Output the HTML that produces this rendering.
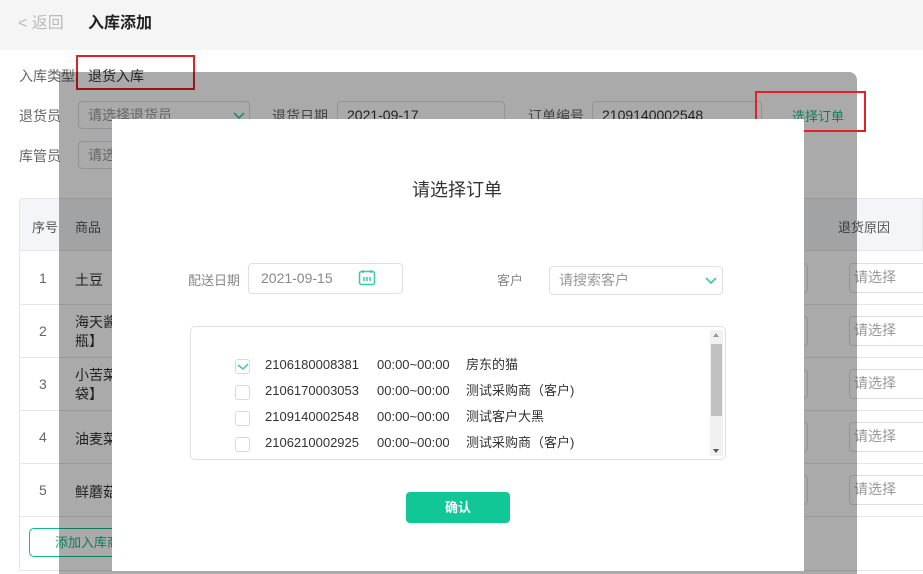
<!DOCTYPE html>
<html><head><meta charset="utf-8"><style>
*{box-sizing:border-box;margin:0;padding:0}
body{width:923px;height:574px;overflow:hidden;background:#fff;font-family:"Liberation Sans","Noto Sans CJK SC",sans-serif;font-size:14px;color:#333;position:relative}
.a{position:absolute;white-space:nowrap}
.inp{position:absolute;border:1px solid #dcdfe6;border-radius:4px;background:#fff;height:28px;line-height:26px;padding-left:9px;color:#999}
.red{position:absolute;border:2px solid #e0202a}
.lab{position:absolute;color:#666;font-size:14px}
.hl{position:absolute;left:19px;right:0;height:1px;background:#e6e6e6}
.cb{position:absolute;left:235px;width:15px;height:15px;border:1px solid #d8d8d8;border-radius:3px;background:#fff}
.row{position:absolute;font-size:13px;color:#333;line-height:16px;height:16px}
</style></head><body>
<div class="a" style="left:0;top:0;width:923px;height:50px;background:#f5f5f5"></div>
<div class="a" style="left:18px;top:13px;font-size:16px;color:#bbb;line-height:22px">&lt; 返回</div>
<div class="a" style="left:88px;top:13px;font-size:16px;font-weight:bold;color:#222;line-height:22px">入库添加</div>

<div class="lab" style="left:19px;top:66px">入库类型</div>
<div class="a" style="left:88px;top:66px;color:#333">退货入库</div>

<div class="lab" style="left:19px;top:106px">退货员</div>
<div class="inp" style="left:78px;top:101px;width:172px">请选择退货员</div>
<svg class="a" style="left:233px;top:111px" width="12" height="10"><path d="M1 2l5 5 5-5" fill="none" stroke="#3cc9a5" stroke-width="1.6"/></svg>
<div class="lab" style="left:272px;top:106px">退货日期</div>
<div class="inp" style="left:337px;top:101px;width:168px;color:#333">2021-09-17</div>
<div class="lab" style="left:528px;top:106px">订单编号</div>
<div class="inp" style="left:592px;top:101px;width:170px;color:#333">2109140002548</div>
<div class="a" style="left:792px;top:106px;color:#16b889;font-size:13px">选择订单</div>

<div class="lab" style="left:19px;top:146px">库管员</div>
<div class="inp" style="left:78px;top:141px;width:172px">请选择</div>

<div class="a" style="left:19px;top:198px;width:904px;height:53px;background:#f3f5f8;border:1px solid #e6e6e6;border-radius:4px 0 0 0"></div>
<div class="a" style="left:32px;top:217px;font-size:13px;color:#555">序号</div>
<div class="a" style="left:75px;top:217px;font-size:13px;color:#555">商品</div>
<div class="a" style="left:838px;top:217px;font-size:13px;color:#555">退货原因</div>
<div class="a" style="left:19px;top:251px;width:1px;height:320px;background:#e6e6e6"></div>
<div class="hl" style="top:304px"></div><div class="hl" style="top:357px"></div><div class="hl" style="top:410px"></div><div class="hl" style="top:463px"></div><div class="hl" style="top:516px"></div><div class="hl" style="top:570px"></div>
<div class="a" style="left:39px;top:270px;color:#666">1</div><div class="a" style="left:75px;top:270px">土豆</div>
<div class="a" style="left:39px;top:323px;color:#666">2</div><div class="a" style="left:75px;top:313px;line-height:19px">海天酱<br>瓶】</div>
<div class="a" style="left:39px;top:376px;color:#666">3</div><div class="a" style="left:75px;top:366px;line-height:19px">小苦菜<br>袋】</div>
<div class="a" style="left:39px;top:429px;color:#666">4</div><div class="a" style="left:75px;top:429px">油麦菜</div>
<div class="a" style="left:39px;top:482px;color:#666">5</div><div class="a" style="left:75px;top:482px">鲜蘑菇</div>
<div class="inp" style="left:849px;top:263px;width:90px;height:30px;padding-left:4px">请选择</div>
<div class="inp" style="left:849px;top:316px;width:90px;height:30px;padding-left:4px">请选择</div>
<div class="inp" style="left:849px;top:369px;width:90px;height:30px;padding-left:4px">请选择</div>
<div class="inp" style="left:849px;top:422px;width:90px;height:30px;padding-left:4px">请选择</div>
<div class="inp" style="left:849px;top:475px;width:90px;height:30px;padding-left:4px">请选择</div>
<div class="inp" style="left:760px;top:263px;width:48px;height:30px"></div>
<div class="inp" style="left:760px;top:316px;width:48px;height:30px"></div>
<div class="inp" style="left:760px;top:369px;width:48px;height:30px"></div>
<div class="inp" style="left:760px;top:422px;width:48px;height:30px"></div>
<div class="inp" style="left:760px;top:475px;width:48px;height:30px"></div>
<div class="a" style="left:29px;top:528px;width:130px;height:29px;border:1px solid #16b889;border-radius:5px;color:#16b889;font-size:13px;line-height:27px;padding-left:25px">添加入库商品</div>

<div class="red" style="left:76px;top:55px;width:119px;height:35px"></div>

<div class="a" style="left:59px;top:72px;width:798px;height:502px;background:rgba(0,0,0,0.335);border-radius:0 8px 0 0"></div>

<div class="red" style="left:755px;top:91px;width:111px;height:41px"></div>

<div class="a" style="left:112px;top:119px;width:692px;height:452px;background:#fff"></div>
<div class="a" style="left:412px;top:176px;font-size:18px;color:#333">请选择订单</div>
<div class="a" style="left:188px;top:270px;font-size:13px;color:#888">配送日期</div>
<div class="inp" style="left:248px;top:263px;width:155px;height:31px;line-height:29px;font-size:14px;color:#888;padding-left:12px">2021-09-15</div>
<svg class="a" style="left:358px;top:269px" width="18" height="17" viewBox="0 0 18 17"><rect x="1.5" y="2.5" width="15" height="13" rx="2" fill="none" stroke="#3cc9a5" stroke-width="1.5"/><path d="M5 1v3M13 1v3M6 8v4M9 8v4M12 8v4" stroke="#3cc9a5" stroke-width="1.5"/></svg>
<div class="a" style="left:497px;top:270px;font-size:13px;color:#888">客户</div>
<div class="inp" style="left:549px;top:266px;width:174px;height:29px;font-size:14px;color:#999">请搜索客户</div>
<svg class="a" style="left:705px;top:276px" width="12" height="10"><path d="M1 2l5 5 5-5" fill="none" stroke="#3cc9a5" stroke-width="1.6"/></svg>

<div class="a" style="left:190px;top:326px;width:536px;height:134px;border:1px solid #e0e0e0;border-radius:5px"></div>
<div class="a" style="left:710px;top:330px;width:13px;height:126px;background:#f1f1f1"></div>
<div class="a" style="left:711px;top:344px;width:11px;height:72px;background:#c1c1c1"></div>
<div class="a" style="left:713px;top:333px;width:0;height:0;border:3px solid transparent;border-bottom:4px solid #999;border-top:0"></div>
<div class="a" style="left:713px;top:449px;width:0;height:0;border:3px solid transparent;border-top:4px solid #555;border-bottom:0"></div>

<div class="cb" style="top:359px"></div>
<svg class="a" style="left:237px;top:362px" width="12" height="10"><path d="M1 3l5 4 5-5" fill="none" stroke="#3cc9a5" stroke-width="1.5"/></svg>
<div class="cb" style="top:385px"></div><div class="cb" style="top:411px"></div><div class="cb" style="top:437px"></div>
<div class="row" style="left:265px;top:357px">2106180008381</div><div class="row" style="left:377px;top:357px">00:00~00:00</div><div class="row" style="left:466px;top:357px">房东的猫</div>
<div class="row" style="left:265px;top:383px">2106170003053</div><div class="row" style="left:377px;top:383px">00:00~00:00</div><div class="row" style="left:466px;top:383px">测试采购商（客户)</div>
<div class="row" style="left:265px;top:409px">2109140002548</div><div class="row" style="left:377px;top:409px">00:00~00:00</div><div class="row" style="left:466px;top:409px">测试客户大黑</div>
<div class="row" style="left:265px;top:435px">2106210002925</div><div class="row" style="left:377px;top:435px">00:00~00:00</div><div class="row" style="left:466px;top:435px">测试采购商（客户)</div>

<div class="a" style="left:406px;top:492px;width:104px;height:31px;background:#10c795;border-radius:4px;color:#fff;font-size:13px;font-weight:bold;text-align:center;line-height:31px">确认</div>
</body></html>
